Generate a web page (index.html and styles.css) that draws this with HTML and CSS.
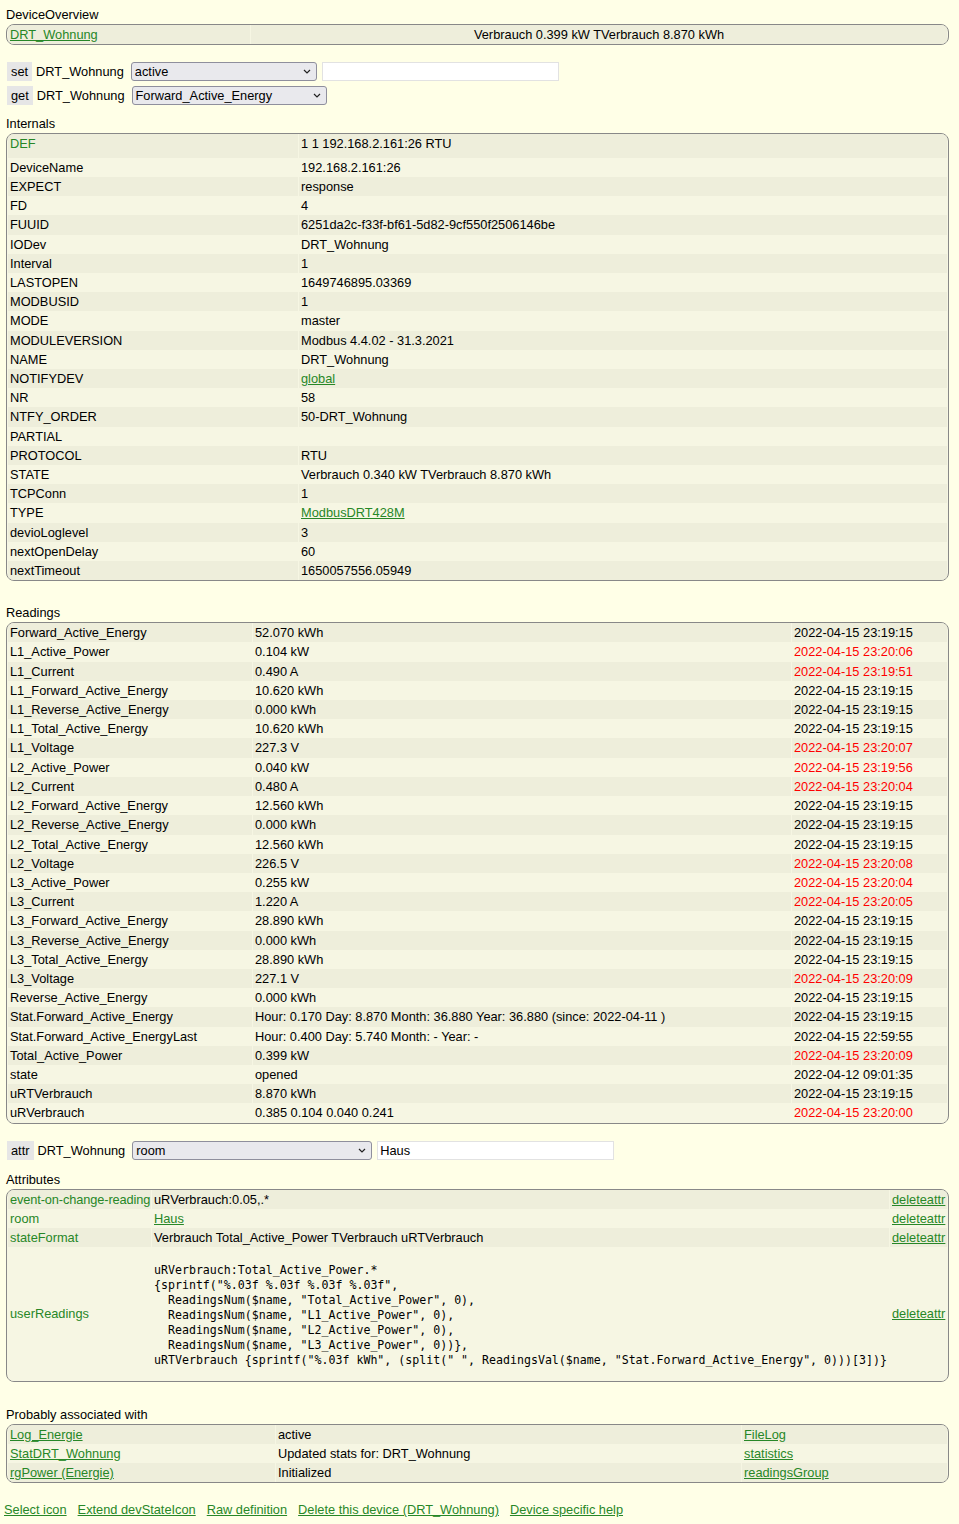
FILE: index.html
```html
<!DOCTYPE html>
<html>
<head>
<meta charset="utf-8">
<link rel="stylesheet" href="styles.css">
</head>
<body>
<div class="page">
  <div class="label">DeviceOverview</div>
  <div class="block">
    <table class="tbl">
      <colgroup><col class="ov1"><col></colgroup>
      <tr class="odd"><td><a href="#">DRT_Wohnung</a></td><td class="center">Verbrauch 0.399 kW TVerbrauch 8.870 kWh</td></tr>
    </table>
  </div>

  <div class="cmdrow first">
    <span class="cmd">set</span><span class="dname">DRT_Wohnung</span>
    <span class="sel w186">active</span>
    <span class="inp w237"></span>
  </div>
  <div class="cmdrow second">
    <span class="cmd">get</span><span class="dname">DRT_Wohnung</span>
    <span class="sel w195">Forward_Active_Energy</span>
  </div>

  <div class="label sec-int">Internals</div>
  <div class="block">
    <table class="tbl">
      <colgroup><col class="in1"><col></colgroup>
      <tr class="odd def"><td class="attrname">DEF</td><td>1 1 192.168.2.161:26 RTU</td></tr>
      <tr class="even"><td>DeviceName</td><td>192.168.2.161:26</td></tr>
      <tr class="odd"><td>EXPECT</td><td>response</td></tr>
      <tr class="even"><td>FD</td><td>4</td></tr>
      <tr class="odd"><td>FUUID</td><td>6251da2c-f33f-bf61-5d82-9cf550f2506146be</td></tr>
      <tr class="even"><td>IODev</td><td>DRT_Wohnung</td></tr>
      <tr class="odd"><td>Interval</td><td>1</td></tr>
      <tr class="even"><td>LASTOPEN</td><td>1649746895.03369</td></tr>
      <tr class="odd"><td>MODBUSID</td><td>1</td></tr>
      <tr class="even"><td>MODE</td><td>master</td></tr>
      <tr class="odd"><td>MODULEVERSION</td><td>Modbus 4.4.02 - 31.3.2021</td></tr>
      <tr class="even"><td>NAME</td><td>DRT_Wohnung</td></tr>
      <tr class="odd"><td>NOTIFYDEV</td><td><a href="#">global</a></td></tr>
      <tr class="even"><td>NR</td><td>58</td></tr>
      <tr class="odd"><td>NTFY_ORDER</td><td>50-DRT_Wohnung</td></tr>
      <tr class="even"><td>PARTIAL</td><td></td></tr>
      <tr class="odd"><td>PROTOCOL</td><td>RTU</td></tr>
      <tr class="even"><td>STATE</td><td>Verbrauch 0.340 kW TVerbrauch 8.870 kWh</td></tr>
      <tr class="odd"><td>TCPConn</td><td>1</td></tr>
      <tr class="even"><td>TYPE</td><td><a href="#">ModbusDRT428M</a></td></tr>
      <tr class="odd"><td>devioLoglevel</td><td>3</td></tr>
      <tr class="even"><td>nextOpenDelay</td><td>60</td></tr>
      <tr class="odd"><td>nextTimeout</td><td>1650057556.05949</td></tr>
    </table>
  </div>

  <div class="label sec-next">Readings</div>
  <div class="block">
    <table class="tbl">
      <colgroup><col class="rd1"><col><col class="rd3"></colgroup>
      <tr class="odd"><td>Forward_Active_Energy</td><td>52.070 kWh</td><td>2022-04-15 23:19:15</td></tr>
      <tr class="even"><td>L1_Active_Power</td><td>0.104 kW</td><td class="red">2022-04-15 23:20:06</td></tr>
      <tr class="odd"><td>L1_Current</td><td>0.490 A</td><td class="red">2022-04-15 23:19:51</td></tr>
      <tr class="even"><td>L1_Forward_Active_Energy</td><td>10.620 kWh</td><td>2022-04-15 23:19:15</td></tr>
      <tr class="odd"><td>L1_Reverse_Active_Energy</td><td>0.000 kWh</td><td>2022-04-15 23:19:15</td></tr>
      <tr class="even"><td>L1_Total_Active_Energy</td><td>10.620 kWh</td><td>2022-04-15 23:19:15</td></tr>
      <tr class="odd"><td>L1_Voltage</td><td>227.3 V</td><td class="red">2022-04-15 23:20:07</td></tr>
      <tr class="even"><td>L2_Active_Power</td><td>0.040 kW</td><td class="red">2022-04-15 23:19:56</td></tr>
      <tr class="odd"><td>L2_Current</td><td>0.480 A</td><td class="red">2022-04-15 23:20:04</td></tr>
      <tr class="even"><td>L2_Forward_Active_Energy</td><td>12.560 kWh</td><td>2022-04-15 23:19:15</td></tr>
      <tr class="odd"><td>L2_Reverse_Active_Energy</td><td>0.000 kWh</td><td>2022-04-15 23:19:15</td></tr>
      <tr class="even"><td>L2_Total_Active_Energy</td><td>12.560 kWh</td><td>2022-04-15 23:19:15</td></tr>
      <tr class="odd"><td>L2_Voltage</td><td>226.5 V</td><td class="red">2022-04-15 23:20:08</td></tr>
      <tr class="even"><td>L3_Active_Power</td><td>0.255 kW</td><td class="red">2022-04-15 23:20:04</td></tr>
      <tr class="odd"><td>L3_Current</td><td>1.220 A</td><td class="red">2022-04-15 23:20:05</td></tr>
      <tr class="even"><td>L3_Forward_Active_Energy</td><td>28.890 kWh</td><td>2022-04-15 23:19:15</td></tr>
      <tr class="odd"><td>L3_Reverse_Active_Energy</td><td>0.000 kWh</td><td>2022-04-15 23:19:15</td></tr>
      <tr class="even"><td>L3_Total_Active_Energy</td><td>28.890 kWh</td><td>2022-04-15 23:19:15</td></tr>
      <tr class="odd"><td>L3_Voltage</td><td>227.1 V</td><td class="red">2022-04-15 23:20:09</td></tr>
      <tr class="even"><td>Reverse_Active_Energy</td><td>0.000 kWh</td><td>2022-04-15 23:19:15</td></tr>
      <tr class="odd"><td>Stat.Forward_Active_Energy</td><td>Hour: 0.170 Day: 8.870 Month: 36.880 Year: 36.880 (since: 2022-04-11 )</td><td>2022-04-15 23:19:15</td></tr>
      <tr class="even"><td>Stat.Forward_Active_EnergyLast</td><td>Hour: 0.400 Day: 5.740 Month: - Year: -</td><td>2022-04-15 22:59:55</td></tr>
      <tr class="odd"><td>Total_Active_Power</td><td>0.399 kW</td><td class="red">2022-04-15 23:20:09</td></tr>
      <tr class="even"><td>state</td><td>opened</td><td>2022-04-12 09:01:35</td></tr>
      <tr class="odd"><td>uRTVerbrauch</td><td>8.870 kWh</td><td>2022-04-15 23:19:15</td></tr>
      <tr class="even"><td>uRVerbrauch</td><td>0.385 0.104 0.040 0.241</td><td class="red">2022-04-15 23:20:00</td></tr>
    </table>
  </div>

  <div class="cmdrow first">
    <span class="cmd">attr</span><span class="dname">DRT_Wohnung</span>
    <span class="sel w240">room</span>
    <span class="inp w237">Haus</span>
  </div>

  <div class="label sec-attr">Attributes</div>
  <div class="block">
    <table class="tbl">
      <colgroup><col class="at1"><col><col class="at3"></colgroup>
      <tr class="odd"><td class="attrname tight">event-on-change-reading</td><td>uRVerbrauch:0.05,.*</td><td><a href="#">deleteattr</a></td></tr>
      <tr class="even"><td class="attrname">room</td><td><a href="#">Haus</a></td><td><a href="#">deleteattr</a></td></tr>
      <tr class="odd"><td class="attrname">stateFormat</td><td>Verbrauch Total_Active_Power TVerbrauch uRTVerbrauch</td><td><a href="#">deleteattr</a></td></tr>
      <tr class="even tall"><td class="attrname">userReadings</td><td><pre class="code">uRVerbrauch:Total_Active_Power.*
{sprintf("%.03f %.03f %.03f %.03f",
  ReadingsNum($name, "Total_Active_Power", 0),
  ReadingsNum($name, "L1_Active_Power", 0),
  ReadingsNum($name, "L2_Active_Power", 0),
  ReadingsNum($name, "L3_Active_Power", 0))},
uRTVerbrauch {sprintf("%.03f kWh", (split(" ", ReadingsVal($name, "Stat.Forward_Active_Energy", 0)))[3])}</pre></td><td><a href="#">deleteattr</a></td></tr>
    </table>
  </div>

  <div class="label sec-assoc">Probably associated with</div>
  <div class="block">
    <table class="tbl">
      <colgroup><col class="pa1"><col class="pa2"><col></colgroup>
      <tr class="odd"><td><a href="#">Log_Energie</a></td><td>active</td><td><a href="#">FileLog</a></td></tr>
      <tr class="even"><td><a href="#">StatDRT_Wohnung</a></td><td>Updated stats for: DRT_Wohnung</td><td><a href="#">statistics</a></td></tr>
      <tr class="odd"><td><a href="#">rgPower (Energie)</a></td><td>Initialized</td><td><a href="#">readingsGroup</a></td></tr>
    </table>
  </div>

  <div class="links">
    <a href="#">Select icon</a>
    <a href="#">Extend devStateIcon</a>
    <a href="#">Raw definition</a>
    <a href="#">Delete this device (DRT_Wohnung)</a>
    <a href="#">Device specific help</a>
  </div>
</div>
</body>
</html>
```
FILE: styles.css
```css
html, body {
  margin: 0;
  padding: 0;
}
body {
  background: #FFFFE7;
  font-family: "Liberation Sans", Arial, sans-serif;
  font-size: 12.8px;
  color: #000;
}
a {
  color: #278727;
  text-decoration: underline;
}
.page {
  padding: 7px 0 20px 6px;
  width: 943px;
}
.label {
  height: 16px;
  line-height: 16px;
}
.sec-int { margin-top: 11px; }
.sec-attr { margin-top: 12px; }
.sec-next { margin-top: 24px; }
.sec-assoc { margin-top: 25px; }

.block {
  margin-top: 1px;
  border: 1px solid #888;
  border-radius: 8px;
  background: #F6F6E3;
  overflow: hidden;
}
.tbl {
  width: 100%;
  table-layout: fixed;
  border-collapse: separate;
  border-spacing: 1px 0;
}
.tbl td {
  padding: 0 2px;
  height: 19.2px;
  line-height: 19.2px;
  white-space: nowrap;
  overflow: hidden;
  vertical-align: middle;
}
.odd td { background: #EEEEDB; }
.even td { background: #F6F6E3; }
.center { text-align: center; }
.red { color: #FF0000; }
.attrname { color: #278727; }
.tbl td.tight {
  letter-spacing: -0.12px;
  padding-right: 0;
  overflow: visible;
}

.def td {
  height: 23.6px;
  vertical-align: top;
}

.ov1 { width: 242px; }
.in1 { width: 290px; }
.rd1 { width: 244px; }
.rd3 { width: 155px; }
.at1 { width: 143px; }
.at3 { width: 57px; }
.pa1 { width: 267px; }
.pa2 { width: 465px; }

.tall td { height: auto; }
.code {
  margin: 16px 0 12.4px 0;
  font-family: "DejaVu Sans Mono", "Liberation Mono", monospace;
  font-size: 11.6px;
  line-height: 15px;
  color: #000;
}

.cmdrow {
  display: flex;
  align-items: center;
  height: 19px;
  padding-left: 1px;
}
.cmdrow.first { margin-top: 17px; }
.cmdrow.second { margin-top: 5px; }
.cmd {
  background: #E6E6E6;
  height: 19px;
  line-height: 19px;
  padding: 0 4px;
}
.dname {
  margin-left: 4px;
  margin-right: 7px;
}
.sel {
  box-sizing: border-box;
  height: 19px;
  line-height: 17px;
  border: 1px solid #8F8F9D;
  border-radius: 3px;
  background-color: #E9E9ED;
  background-image: url("data:image/svg+xml;utf8,<svg xmlns='http://www.w3.org/2000/svg' width='8' height='5' viewBox='0 0 8 5'><path d='M1 1 L4 4 L7 1' fill='none' stroke='%23222' stroke-width='1.2'/></svg>");
  background-repeat: no-repeat;
  background-position: right 5px center;
  padding-left: 3px;
}
.w186 { width: 186px; }
.w195 { width: 195px; }
.w240 { width: 240px; }
.inp {
  box-sizing: border-box;
  height: 19px;
  line-height: 17px;
  border: 1px solid #E2E2E2;
  background: #fff;
  margin-left: 5px;
  padding-left: 2px;
}
.w237 { width: 237px; }

.links {
  margin-top: 19px;
  margin-left: -2px;
  display: flex;
  gap: 11px;
  line-height: 16px;
}
```
